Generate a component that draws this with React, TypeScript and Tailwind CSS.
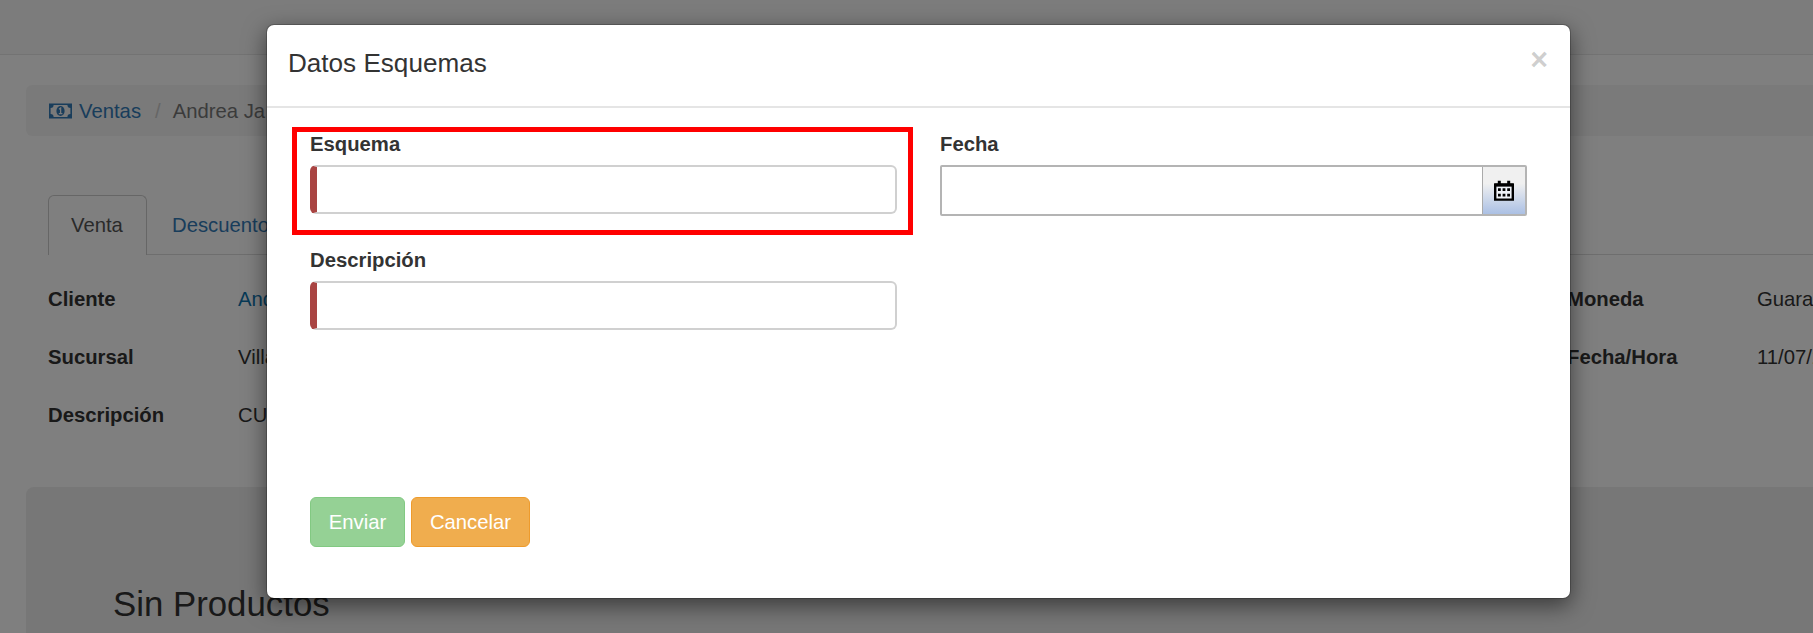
import type { ReactNode } from 'react';

function MoneyIcon() {
  return (
    <svg className="mr-[7px] block h-[16px] w-[23px] shrink-0" viewBox="0 0 23 16">
      <path
        fill="currentColor"
        fillRule="evenodd"
        d="M0 0.5h23v15H0zM4.600 2.100a3 3 0 0 1-3 3v5.800a3 3 0 0 1 3 3h13.800a3 3 0 0 1 3-3V5.100a3 3 0 0 1-3-3z"
      />
      <ellipse cx="11.5" cy="8" rx="4.100" ry="4.900" fill="currentColor" />
      <path d="M10 6.200l1.600-1.100v5M9.800 10.600h3.600" fill="none" stroke="#f5f5f5" strokeWidth="1.300" />
    </svg>
  );
}

function CalendarIcon() {
  return (
    <svg className="block h-[22px] w-[22px]" viewBox="0 0 22 22">
      <path d="M2.200 5h17.600v14.600H2.200z" fill="#eef1f7" stroke="#000" strokeWidth="2.400" />
      <path d="M1.200 3.300h19.600v3.200H1.200zM4.800 0.800h3v3h-3zM14.200 0.800h3v3h-3z" />
      <path d="M5 8.300h2.800v2.800H5zM9.600 8.300h2.800v2.800H9.600zM14.200 8.300h2.800v2.800h-2.800zM5 13.800h2.800v2.800H5zM9.600 13.800h2.800v2.800H9.600zM14.200 13.800h2.800v2.800h-2.800z" />
    </svg>
  );
}

function Pair({ label, children }: { label: string; children: ReactNode }) {
  return (
    <div className="flex h-[58px]">
      <div className="w-[190px] shrink-0 font-bold">{label}</div>
      <div>{children}</div>
    </div>
  );
}

function RequiredField({ label }: { label: string }) {
  return (
    <label className="block h-[116px]">
      <span className="block h-[35px] font-bold">{label}</span>
      <input className="block h-[49px] w-[587px] rounded-[6px] border-2 border-l-[7px] border-[#d0d0d0] border-l-[#a94442] bg-white px-4 outline-none" />
    </label>
  );
}

function SalePage() {
  return (
    <div className="h-full bg-white">
      <div className="h-[55px] border-b border-[#e7e7e7] bg-[#f8f8f8]" />
      <div className="ml-[26px] pt-[30px]">
        <nav className="flex h-[51px] items-center rounded-l-[6px] bg-[#f5f5f5] pt-px pl-[23px]">
          <a className="flex items-center text-[#337ab7]">
            <MoneyIcon />
            Ventas
          </a>
          <span className="ml-[14px] text-[#ccc]">/</span>
          <span className="ml-[12px] text-[#777]">Andrea Ja</span>
        </nav>
        <div className="mt-[59px] ml-[22px]">
          <div className="flex h-[60px] border-b border-[#ddd]">
            <div className="-mb-px h-[60px] w-[99px] rounded-t-[6px] border border-b-0 border-[#ccc] bg-white pt-[15px] pl-[22px] text-[#555]">
              Venta
            </div>
            <div className="pt-[16px] pl-[25px] text-[#337ab7]">Descuentos</div>
          </div>
          <div className="flex pt-[30px]">
            <div className="w-[1519px] shrink-0">
              <Pair label="Cliente">
                <a className="text-[#0f75ae]">Andrea</a>
              </Pair>
              <Pair label="Sucursal">Villa</Pair>
              <Pair label="Descripción">CU</Pair>
            </div>
            <div className="shrink-0">
              <Pair label="Moneda">Guaraníes</Pair>
              <Pair label="Fecha/Hora">11/07/2</Pair>
            </div>
          </div>
        </div>
        <section className="mt-[28px] h-[200px] rounded-tl-[8px] bg-[#eee] pt-[98px] pl-[87px] text-[34.8px] leading-[38px]">
          Sin Productos
        </section>
      </div>
    </div>
  );
}

function SchemeDialog() {
  return (
    <div
      role="dialog"
      className="flex h-[575px] w-[1305px] flex-col rounded-[8px] border border-black/20 bg-white bg-clip-padding shadow-[0_7px_22px_rgba(0,0,0,0.5)]"
    >
      <header className="flex h-[83px] shrink-0 justify-between border-b-[2px] border-[#e5e5e5] pr-[22px] pl-[21px]">
        <h4 className="pt-[20px] text-[26.1px] leading-[37px]">Datos Esquemas</h4>
        <button className="mt-[19px] h-[31px] text-[30.5px] leading-[31px] font-bold text-black/20">×</button>
      </header>
      <div className="flex grow flex-col pl-[43px]">
        <div className="flex pt-[22px]">
          <div className="relative w-[630px]">
            <RequiredField label="Esquema" />
            <RequiredField label="Descripción" />
            <div className="pointer-events-none absolute -top-[3px] -left-[18px] h-[108px] w-[621px] border-[5px] border-[#f00]" />
          </div>
          <label className="block">
            <span className="block h-[35px] font-bold">Fecha</span>
            <span className="flex h-[51px] w-[587px] rounded-[2px] border-2 border-[#b4b4b4]">
              <input className="min-w-0 grow bg-white px-3 outline-none" />
              <span className="flex w-[43px] items-center justify-center border-l border-[#aaa] bg-linear-to-b from-[#f0f0f0] from-35% to-[#abc0e4]">
                <CalendarIcon />
              </span>
            </span>
          </label>
        </div>
        <div className="mt-[135px] flex gap-[6px] pb-[49px] text-white">
          <button className="h-[50px] w-[95px] rounded-[6px] border-[1.5px] border-[#82c982] bg-[#95d195]">Enviar</button>
          <button className="h-[50px] w-[119px] rounded-[6px] border-[1.5px] border-[#ee9b2c] bg-[#f0ad4e]">Cancelar</button>
        </div>
      </div>
    </div>
  );
}

export default function App() {
  return (
    <div className="relative h-[633px] w-full overflow-hidden font-['Liberation_Sans',Arial,sans-serif] text-[20.3px] leading-[29px] text-[#333]">
      <SalePage />
      <div className="absolute inset-0 bg-black/50 pt-[24px] pl-[266px]">
        <SchemeDialog />
      </div>
    </div>
  );
}
